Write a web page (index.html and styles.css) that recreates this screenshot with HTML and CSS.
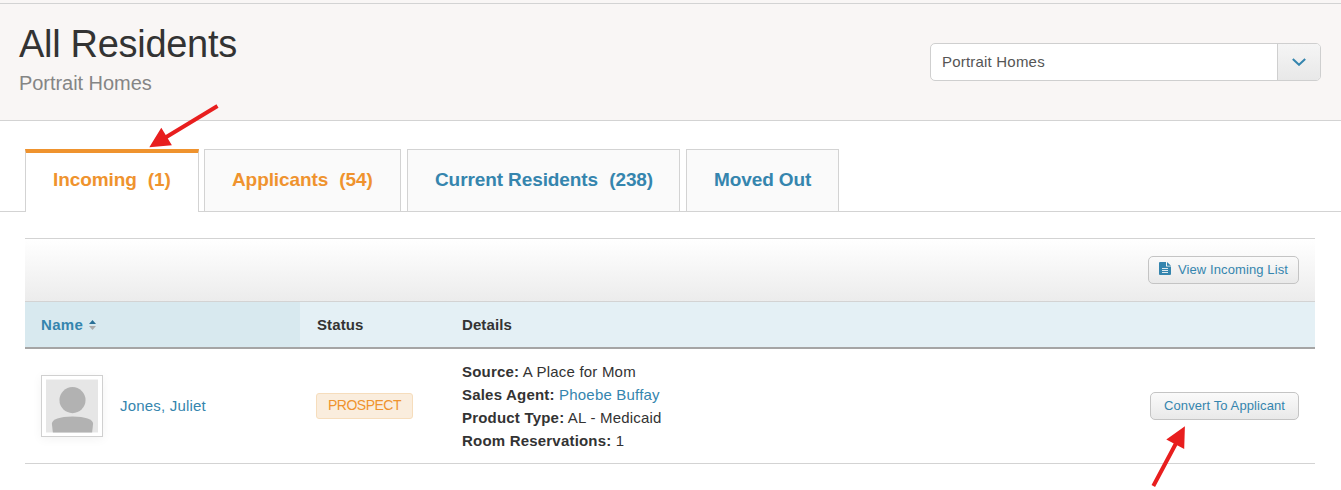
FILE: index.html
```html
<!DOCTYPE html>
<html lang="en">
<head>
    <meta charset="UTF-8">
    <meta name="viewport" content="width=device-width, initial-scale=1.0">
    <title>All Residents</title>
    <link rel="stylesheet" href="styles.css">
</head>
<body>

    <header class="page-header">
        <div>
            <h1>All Residents</h1>
            <p class="community">Portrait Homes</p>
        </div>
        <div class="select">
            <span class="select-value">Portrait Homes</span>
            <span class="select-toggle">
                <svg width="14" height="8" viewBox="0 0 14 8"><path d="M.8 1l6.2 5.8L13.2 1"/></svg>
            </span>
        </div>
    </header>

    <nav class="tabs">
        <a href="#" class="tab tab-incoming active">Incoming <span>(1)</span></a>
        <a href="#" class="tab tab-applicants">Applicants <span>(54)</span></a>
        <a href="#" class="tab tab-current">Current Residents <span>(238)</span></a>
        <a href="#" class="tab tab-moved">Moved Out</a>
    </nav>

    <main class="panel">
        <div class="toolbar">
            <a href="#" class="btn btn-list">
                <svg width="12" height="13" viewBox="0 0 12 13">
                    <path class="doc" d="M1 0h6v4.5h5V12a1 1 0 0 1-1 1H1a1 1 0 0 1-1-1V1a1 1 0 0 1 1-1zM8 0l4 3.7H8z"/>
                    <path class="lines" d="M3 6.5h6M3 8.5h6M3 10.5h6"/>
                </svg>
                <span>View Incoming List</span>
            </a>
        </div>

        <table class="residents">
            <thead>
                <tr>
                    <th class="col-name">Name
                        <svg width="7" height="10" viewBox="0 0 7 10"><path class="up" d="M3.5 0L7 4H0z"/><path class="down" d="M0 6h7l-3.5 4z"/></svg>
                    </th>
                    <th class="col-status">Status</th>
                    <th class="col-details">Details</th>
                    <th class="col-action"></th>
                </tr>
            </thead>
            <tbody>
                <tr>
                    <td>
                        <div class="person">
                            <span class="avatar">
                                <svg width="53" height="54" viewBox="0 0 53 54">
                                    <rect width="53" height="54"/>
                                    <circle cx="27" cy="21" r="13.3"/>
                                    <path d="M6 45c0-4 8-7.2 21-7.2S48 41 48 45l-1 9H7z"/>
                                </svg>
                            </span>
                            <a href="#">Jones, Juliet</a>
                        </div>
                    </td>
                    <td><span class="badge">PROSPECT</span></td>
                    <td class="details">
                        <p><strong>Source:</strong> A Place for Mom</p>
                        <p><strong>Sales Agent:</strong> <a href="#">Phoebe Buffay</a></p>
                        <p><strong>Product Type:</strong> AL - Medicaid</p>
                        <p><strong>Room Reservations:</strong> 1</p>
                    </td>
                    <td class="action"><a href="#" class="btn btn-convert">Convert To Applicant</a></td>
                </tr>
            </tbody>
        </table>
    </main>

    <!-- Pointer arrows -->
    <svg class="arrows" width="1341" height="490" viewBox="0 0 1341 490">
        <path class="shaft" d="M217.5 106L163 139M1153.3 486L1177 441.5"/>
        <path class="head" d="M149.3 147.2l12-19.4 10.6 17.4zM1184.9 426.3l-18.6 13.2 17.9 9.6z"/>
    </svg>

</body>
</html>
```
FILE: styles.css
```css
* {
    margin: 0;
    padding: 0;
    box-sizing: border-box;
}

body {
    background: #fff;
    color: #333;
    font-family: "Liberation Sans", Arial, sans-serif;
    font-size: 15px;
    border-top: 3px solid #f9f6f5;
    overflow: hidden;
}

a {
    color: #3585ae;
    text-decoration: none;
}

.page-header {
    display: flex;
    justify-content: space-between;
    height: 118px;
    padding: 0 20px 0 19px;
    background: #f9f6f5;
    border-top: 1px solid #d3d3d3;
    border-bottom: 1px solid #d3d3d3;
}

h1 {
    font-size: 38px;
    font-weight: normal;
    line-height: 44px;
    letter-spacing: -0.3px;
    margin-top: 18px;
}

.community {
    color: #858585;
    font-size: 20px;
    line-height: 24px;
    letter-spacing: -0.05px;
    margin-top: 5px;
}

.select {
    display: flex;
    width: 391px;
    height: 38px;
    margin-top: 39px;
    background: #fff;
    border: 1px solid #cfcfcf;
    border-radius: 5px;
    overflow: hidden;
}

.select-value {
    flex: 1;
    padding-left: 11px;
    color: #555;
    line-height: 36px;
    letter-spacing: 0.2px;
}

.select-toggle {
    display: flex;
    align-items: center;
    justify-content: center;
    width: 43px;
    border-left: 1px solid #cfcfcf;
    background: linear-gradient(#f5f5f5, #e8e8e8);
}

.select-toggle path {
    fill: none;
    stroke: #3585ae;
    stroke-width: 2;
}

/* Tabs */
.tabs {
    display: flex;
    height: 91px;
    padding: 28px 25px 0;
    border-bottom: 1px solid #d3d3d3;
}

.tab {
    height: 62px;
    margin-right: 6px;
    padding-left: 27px;
    background: #fafafa;
    border: 1px solid #d3d3d3;
    border-bottom: none;
    font-size: 19px;
    font-weight: bold;
    line-height: 59px;
    letter-spacing: -0.1px;
    white-space: nowrap;
}

.tab span {
    margin-left: 6px;
}

.tab.active {
    height: 63px;
    margin-right: 5px;
    background: #fff;
    border-top: 4px solid #ef932e;
    line-height: 53px;
}

.tab-incoming,
.tab-applicants {
    color: #ef932e;
}

.tab-incoming { width: 174px; }
.tab-applicants { width: 197px; }
.tab-current { width: 273px; }
.tab-moved { width: 153px; }

/* List */
.panel {
    margin: 26px 26px 0 25px;
}

.toolbar {
    display: flex;
    justify-content: flex-end;
    align-items: center;
    height: 64px;
    padding-right: 16px;
    background: linear-gradient(#fff, #ececec);
    border-top: 1px solid #d3d3d3;
    border-bottom: 1px solid #d3d3d3;
}

.btn {
    display: inline-flex;
    align-items: center;
    height: 28px;
    padding-bottom: 1px;
    border: 1px solid #c4c4c4;
    border-radius: 5px;
    background: linear-gradient(#fafafa, #e9e9e9);
    font-size: 13px;
    white-space: nowrap;
}

.btn-list {
    width: 151px;
    padding-left: 10px;
    gap: 7px;
    letter-spacing: 0.1px;
}

.btn-list svg {
    margin-bottom: 2px;
}

.btn-list .doc {
    fill: #3585ae;
}

.btn-list .lines {
    stroke: #dfe9ee;
}

.btn-convert {
    width: 149px;
    justify-content: center;
    letter-spacing: 0.1px;
}

.residents {
    width: 100%;
    table-layout: fixed;
    border-collapse: separate;
    border-spacing: 0;
}

.residents th {
    height: 47px;
    padding: 0 0 1px 17px;
    background: #e4f0f5;
    border-bottom: 2px solid #a5a5a5;
    text-align: left;
    letter-spacing: 0.1px;
}

.residents th.col-name {
    width: 275px;
    padding-left: 16px;
    background: #d8e9ef;
    color: #3585ae;
    letter-spacing: 0.3px;
}

.col-name svg {
    margin-left: 1px;
}

.residents .col-status { width: 146px; }
.residents .col-details { width: 500px; padding-left: 16px; }

.up { fill: #286f96; }
.down { fill: #aaa; }

.residents td {
    height: 115px;
    border-bottom: 1px solid #d3d3d3;
    padding-left: 16px;
    vertical-align: middle;
}

.person {
    display: flex;
    align-items: center;
    gap: 17px;
}

.person a {
    padding-bottom: 2px;
    letter-spacing: 0.2px;
}

.avatar {
    display: flex;
    width: 62px;
    height: 62px;
    padding: 3px 4px;
    border: 1px solid #d0d0d0;
    box-shadow: 0 2px 10px rgba(0, 0, 0, 0.05);
}

.avatar rect { fill: #e6e6e6; }
.avatar circle,
.avatar path { fill: #b2b2b2; }

.badge {
    display: inline-block;
    width: 97px;
    height: 26px;
    border: 1px solid #f6ddbc;
    border-radius: 3px;
    background: #faeddd;
    color: #ef932e;
    font-size: 14px;
    line-height: 23px;
    letter-spacing: -0.5px;
    text-align: center;
}

.details p {
    line-height: 23px;
    letter-spacing: 0.2px;
}

.residents .action {
    padding-right: 16px;
    text-align: right;
}

/* Arrows */
.arrows {
    position: absolute;
    top: 0;
    left: 0;
    pointer-events: none;
}

.shaft {
    fill: none;
    stroke: #e81e1e;
    stroke-width: 4;
}

.head {
    fill: #e81e1e;
}
```
